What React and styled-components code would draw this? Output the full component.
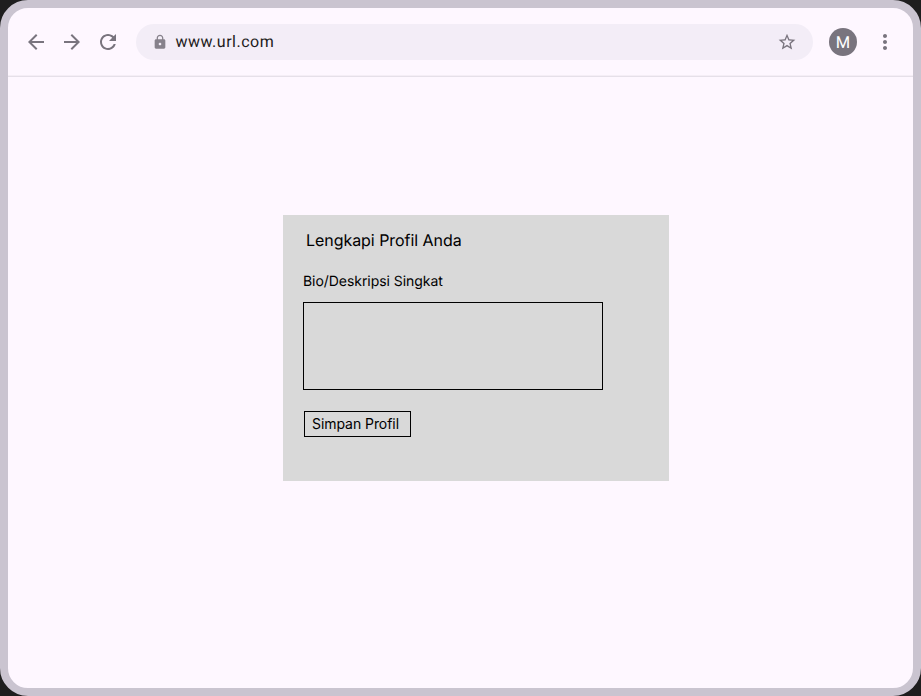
import React from "react";
import styled, { createGlobalStyle } from "styled-components";

const GlobalStyle = createGlobalStyle`
  * { box-sizing: border-box; }
  body { margin: 0; background: #1e1e1e; overflow: hidden; text-rendering: geometricPrecision; }
`;
const Frame = styled.div`
  width: 921px;
  height: 696px;
  border: 8px solid #cac4d0;
  border-radius: 28px;
  background: #fef7ff;
  display: flex;
  flex-direction: column;
  overflow: hidden;
`;
const Toolbar = styled.header`
  height: 69px;
  flex: none;
  display: flex;
  align-items: flex-start;
  padding: 16px 16px 0;
  border-bottom: 1px solid #e6e0e9;
  box-shadow: inset 0 -1px #f5eef6;
`;
const Icon = styled.svg`
  display: block;
  flex: none;
  width: ${(p) => p.$size}px;
  height: ${(p) => p.$size}px;
  fill: ${(p) => p.$color};
`;
const Nav = styled.nav`
  height: 36px;
  display: flex;
  align-items: center;
  gap: 12px;
  margin-right: 16px;
`;
const AddressBar = styled.div`
  width: 677px;
  height: 36px;
  display: flex;
  align-items: center;
  padding: 0 16px 0 15.5px;
  border-radius: 18px;
  background: #f3edf7;
`;
const Url = styled.span`
  flex: 1;
  margin-left: 8px;
  font: 400 16px/24px Roboto, sans-serif;
  letter-spacing: 0.5px;
  color: #1d1b20;
`;
const Avatar = styled.div`
  width: 28px;
  height: 28px;
  margin: 4px 16px 0;
  border-radius: 50%;
  background: #79747e;
  color: #fff;
  font: 400 16.5px/31px Roboto, sans-serif;
  text-align: center;
`;
const MenuSlot = styled.div`
  height: 36px;
  display: flex;
  align-items: center;
`;
const Content = styled.main`
  padding: 138px 0 0 275px;
`;
const Card = styled.section`
  width: 386px;
  height: 266px;
  padding: 15px 20px;
  background: #d9d9d9;
  font-family: Inter, sans-serif;
  color: #000;
`;
const Title = styled.h1`
  margin: 0 0 0 3px;
  font-size: 16px;
  line-height: 20px;
  font-weight: 400;
  letter-spacing: -0.05px;
`;
const Label = styled.label`
  display: block;
  margin-top: 23px;
  font-size: 14px;
  line-height: 18px;
  letter-spacing: -0.05px;
`;
const BioInput = styled.textarea`
  display: block;
  width: 300px;
  height: 88px;
  margin-top: 11px;
  border: 1px solid #000;
  border-radius: 0;
  background: transparent;
  resize: none;
`;
const SaveButton = styled.button`
  display: block;
  width: 107px;
  height: 26px;
  margin: 21px 0 0 1px;
  padding: 0 0 0 7px;
  border: 1px solid #000;
  background: transparent;
  font: 400 14px/24px Inter, sans-serif;
  letter-spacing: -0.06px;
  color: #000;
  text-align: left;
`;

const Glyph = ({ d, size = 24, color = "#79747e" }) => (
  <Icon $size={size} $color={color} viewBox="0 0 24 24"><path d={d} /></Icon>
);

export default function App() {
  return (
    <>
      <GlobalStyle />
      <Frame>
        <Toolbar>
          <Nav>
            <Glyph d="M20 11H7.83l5.59-5.59L12 4l-8 8 8 8 1.41-1.41L7.83 13H20v-2z" />
            <Glyph d="M12 4l-1.41 1.41L16.17 11H4v2h12.17l-5.58 5.59L12 20l8-8z" />
            <Glyph d="M17.65 6.35C16.2 4.9 14.21 4 12 4c-4.42 0-7.99 3.58-7.99 8s3.57 8 7.99 8c3.73 0 6.84-2.55 7.73-6h-2.08c-.82 2.33-3.04 4-5.65 4-3.31 0-6-2.69-6-6s2.69-6 6-6c1.66 0 3.14.69 4.22 1.78L13 11h7V4l-2.35 2.35z" />
          </Nav>
          <AddressBar>
            <Glyph size={16} color="#86818b" d="M18 8h-1V6c0-2.76-2.24-5-5-5S7 3.24 7 6v2H6c-1.1 0-2 .9-2 2v10c0 1.1.9 2 2 2h12c1.1 0 2-.9 2-2V10c0-1.1-.9-2-2-2zm-6 9c-1.1 0-2-.9-2-2s.9-2 2-2 2 .9 2 2-.9 2-2 2zm3.1-9H8.9V6c0-1.71 1.39-3.1 3.1-3.1 1.71 0 3.1 1.39 3.1 3.1v2z" />
            <Url>www.url.com</Url>
            <Glyph size={20} d="M22 9.24l-7.19-.62L12 2 9.19 8.63 2 9.24l5.46 4.73L5.82 21 12 17.27 18.18 21l-1.63-7.03L22 9.24zM12 15.4l-3.76 2.27 1-4.28-3.32-2.88 4.38-.38L12 6.1l1.71 4.04 4.38.38-3.32 2.88 1 4.28L12 15.4z" />
          </AddressBar>
          <Avatar>M</Avatar>
          <MenuSlot>
            <Glyph d="M12 8c1.1 0 2-.9 2-2s-.9-2-2-2-2 .9-2 2 .9 2 2 2zm0 2c-1.1 0-2 .9-2 2s.9 2 2 2 2-.9 2-2-.9-2-2-2zm0 6c-1.1 0-2 .9-2 2s.9 2 2 2 2-.9 2-2-.9-2-2-2z" />
          </MenuSlot>
        </Toolbar>
        <Content>
          <Card>
            <Title>Lengkapi Profil Anda</Title>
            <Label htmlFor="bio">Bio/Deskripsi Singkat</Label>
            <BioInput id="bio" />
            <SaveButton type="button">Simpan Profil</SaveButton>
          </Card>
        </Content>
      </Frame>
    </>
  );
}
